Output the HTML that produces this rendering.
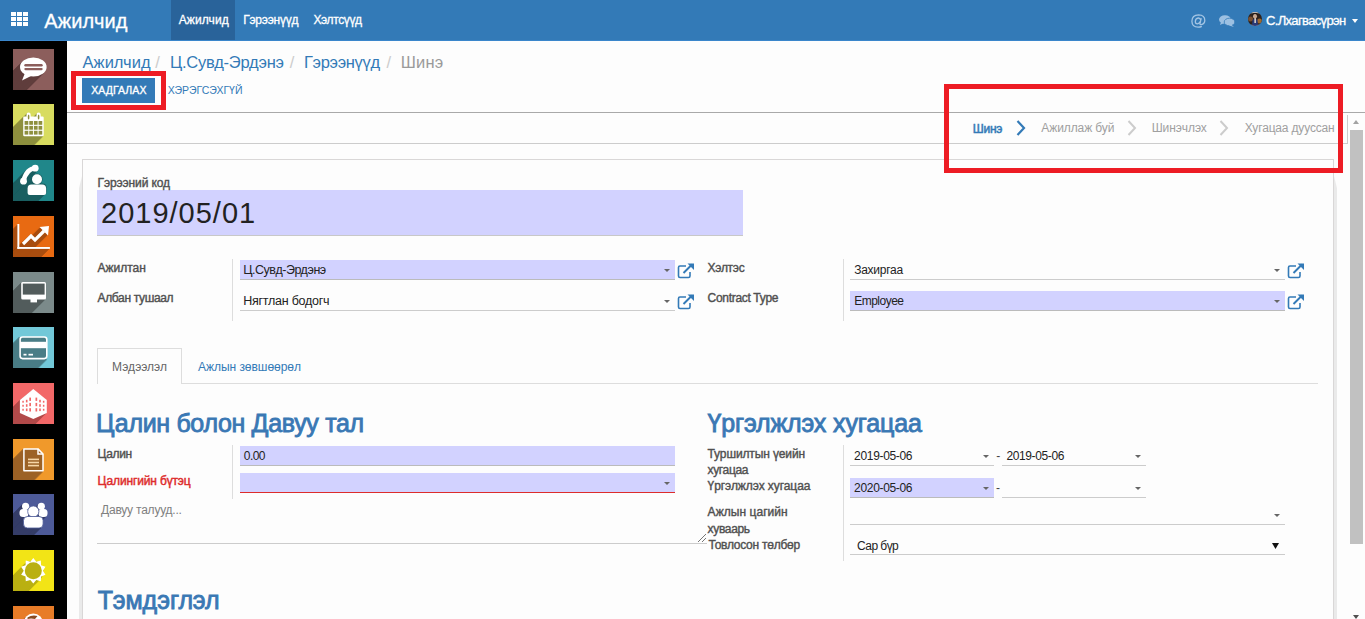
<!DOCTYPE html>
<html><head><meta charset="utf-8">
<style>
*{box-sizing:border-box;margin:0;padding:0}
html,body{width:1365px;height:619px;overflow:hidden;background:#fdfdfd;font-family:"Liberation Sans",sans-serif;color:#4c4c4c}
.t{position:absolute;white-space:nowrap;line-height:1}
#hdr{position:absolute;left:0;top:0;width:1365px;height:41px;background:#337ab7;border-bottom:1px solid #3a86cb}
#side{position:absolute;left:0;top:41px;width:67px;height:578px;background:#000}
.ic{position:absolute;left:13px;width:41px;height:41px;overflow:hidden}
.lbl{font-weight:bold;font-size:12px;color:#4c4c4c}
.val{font-size:12px;color:#333}
.req{position:absolute;background:#d2d2ff;border-bottom:1px solid #bbb}
.ul{position:absolute;height:1px;background:#ccc}
.sep{position:absolute;width:1px;background:#ddd}
.car{position:absolute;width:0;height:0;border-left:3px solid transparent;border-right:3px solid transparent;border-top:3px solid #666}
.h2{font-size:25px;font-weight:bold;color:#3a78b4}
.ext{position:absolute;width:18px;height:16px}
.redbox{position:absolute;border:5px solid #ed1c24}
</style></head><body>
<div id="hdr">
  <div style="position:absolute;left:171px;top:0;width:64px;height:40px;background:#29639a"></div>
  <svg style="position:absolute;left:11px;top:12px" width="17" height="14" viewBox="0 0 17 14">
    <g fill="#fff"><rect x="0" y="0" width="5" height="4"/><rect x="6" y="0" width="5" height="4"/><rect x="12" y="0" width="5" height="4"/>
    <rect x="0" y="5" width="5" height="4"/><rect x="6" y="5" width="5" height="4"/><rect x="12" y="5" width="5" height="4"/>
    <rect x="0" y="10" width="5" height="4"/><rect x="6" y="10" width="5" height="4"/><rect x="12" y="10" width="5" height="4"/></g></svg>
  <svg style="position:absolute;left:1191px;top:14px" width="15" height="14" viewBox="0 0 15 14"><g fill="none" stroke="#a4c5e4" stroke-width="1.3"><path d="M10.2,4.2 L9,9.5 Q8.8,10.8 10.2,10.6 Q13.6,10 13.8,6.6 Q13.8,1 7.6,0.9 Q1,1 0.9,7.2 Q1,13 7.2,13.1 Q9.2,13.1 10.8,12.3"/><path d="M9.7,6 Q9.2,3.9 7.3,4 Q4.5,4.3 4.3,7.5 Q4.3,9.8 6.3,9.8 Q8.5,9.7 9.3,7.5"/></g></svg>
  <svg style="position:absolute;left:1219px;top:15px" width="16" height="12" viewBox="0 0 16 12">
    <ellipse cx="6" cy="4.5" rx="6" ry="4.3" fill="#9cc0e2"/><polygon points="2,7 1,10 5,8" fill="#9cc0e2"/>
    <ellipse cx="10.5" cy="7" rx="5.3" ry="3.8" fill="#9cc0e2" stroke="#337ab7" stroke-width="0.8"/><polygon points="12,9.5 15,12 10,10.5" fill="#9cc0e2"/></svg>
  <svg style="position:absolute;left:1248px;top:12px" width="14" height="14" viewBox="0 0 14 14"><defs><clipPath id="av"><circle cx="7" cy="7" r="7"/></clipPath></defs><g clip-path="url(#av)"><rect width="14" height="14" fill="#2e221c"/><rect x="0" y="0" width="14" height="1.2" fill="#e8e0d8"/><rect x="0" y="12.8" width="14" height="1.2" fill="#e8e0d8"/><circle cx="2.5" cy="7" r="2.5" fill="#7a5030"/><circle cx="11.5" cy="9" r="2.5" fill="#a06a30"/><path d="M4,14 L4.5,8 Q7,6 9.5,8 L10,14 Z" fill="#2a3a78"/><rect x="6.4" y="6" width="1.5" height="5" fill="#e0d8d0"/><ellipse cx="7" cy="4.2" rx="2" ry="2.3" fill="#c8a890"/><path d="M4.5,3 Q7,0.5 9.5,3 L9.5,2 Q7,-0.5 4.5,2 Z" fill="#1a1410"/></g></svg>
  <div style="position:absolute;left:1352px;top:19px;width:0;height:0;border-left:3px solid transparent;border-right:3px solid transparent;border-top:4px solid #fff"></div>
</div>
<div id="side">
</div>
<div style="position:absolute;left:0;top:0">
<svg class="ic" style="top:49px" width="41" height="41" viewBox="0 0 41 41"><rect width="41" height="41" fill="#8c5e5c"/><defs><g id="s1"><ellipse cx="20.3" cy="18" rx="13.3" ry="9.6" stroke="none"/><polygon points="12,24 9,31.5 20,26" stroke="none"/></g></defs><g fill="#603e3d" stroke="#603e3d"><use href="#s1" x="-1" y="1"/><use href="#s1" x="-2" y="2"/><use href="#s1" x="-3" y="3"/><use href="#s1" x="-4" y="4"/><use href="#s1" x="-5" y="5"/><use href="#s1" x="-6" y="6"/><use href="#s1" x="-7" y="7"/><use href="#s1" x="-8" y="8"/><use href="#s1" x="-9" y="9"/><use href="#s1" x="-10" y="10"/><use href="#s1" x="-11" y="11"/><use href="#s1" x="-12" y="12"/><use href="#s1" x="-13" y="13"/><use href="#s1" x="-14" y="14"/><use href="#s1" x="-15" y="15"/><use href="#s1" x="-16" y="16"/><use href="#s1" x="-17" y="17"/><use href="#s1" x="-18" y="18"/><use href="#s1" x="-19" y="19"/><use href="#s1" x="-20" y="20"/><use href="#s1" x="-21" y="21"/><use href="#s1" x="-22" y="22"/><use href="#s1" x="-23" y="23"/><use href="#s1" x="-24" y="24"/><use href="#s1" x="-25" y="25"/><use href="#s1" x="-26" y="26"/><use href="#s1" x="-27" y="27"/><use href="#s1" x="-28" y="28"/><use href="#s1" x="-29" y="29"/><use href="#s1" x="-30" y="30"/><use href="#s1" x="-31" y="31"/><use href="#s1" x="-32" y="32"/><use href="#s1" x="-33" y="33"/><use href="#s1" x="-34" y="34"/><use href="#s1" x="-35" y="35"/><use href="#s1" x="-36" y="36"/><use href="#s1" x="-37" y="37"/><use href="#s1" x="-38" y="38"/><use href="#s1" x="-39" y="39"/><use href="#s1" x="-40" y="40"/><use href="#s1" x="-41" y="41"/><use href="#s1" x="-42" y="42"/><use href="#s1" x="-43" y="43"/><use href="#s1" x="-44" y="44"/><use href="#s1" x="-45" y="45"/></g><g fill="#fff"><ellipse cx="20.3" cy="18" rx="13.3" ry="9.6"/><polygon points="12,24 9,31.5 20,26"/></g><rect x="11.3" y="15" width="18.4" height="2.4" rx="1.2" fill="#8c5e5c"/><rect x="11.3" y="19" width="18.4" height="2.2" rx="1.1" fill="#8c5e5c"/></svg>
<svg class="ic" style="top:104px" width="41" height="41" viewBox="0 0 41 41"><rect width="41" height="41" fill="#d8dc5f"/><defs><g id="s2"><rect x="10.2" y="12.5" width="20.5" height="19.8" stroke="none"/><rect x="13.5" y="8.6" width="4.2" height="7.5" rx="2.1" stroke="none"/><rect x="23.5" y="8.6" width="4.2" height="7.5" rx="2.1" stroke="none"/></g></defs><g fill="#8e8f3e" stroke="#8e8f3e"><use href="#s2" x="-1" y="1"/><use href="#s2" x="-2" y="2"/><use href="#s2" x="-3" y="3"/><use href="#s2" x="-4" y="4"/><use href="#s2" x="-5" y="5"/><use href="#s2" x="-6" y="6"/><use href="#s2" x="-7" y="7"/><use href="#s2" x="-8" y="8"/><use href="#s2" x="-9" y="9"/><use href="#s2" x="-10" y="10"/><use href="#s2" x="-11" y="11"/><use href="#s2" x="-12" y="12"/><use href="#s2" x="-13" y="13"/><use href="#s2" x="-14" y="14"/><use href="#s2" x="-15" y="15"/><use href="#s2" x="-16" y="16"/><use href="#s2" x="-17" y="17"/><use href="#s2" x="-18" y="18"/><use href="#s2" x="-19" y="19"/><use href="#s2" x="-20" y="20"/><use href="#s2" x="-21" y="21"/><use href="#s2" x="-22" y="22"/><use href="#s2" x="-23" y="23"/><use href="#s2" x="-24" y="24"/><use href="#s2" x="-25" y="25"/><use href="#s2" x="-26" y="26"/><use href="#s2" x="-27" y="27"/><use href="#s2" x="-28" y="28"/><use href="#s2" x="-29" y="29"/><use href="#s2" x="-30" y="30"/><use href="#s2" x="-31" y="31"/><use href="#s2" x="-32" y="32"/><use href="#s2" x="-33" y="33"/><use href="#s2" x="-34" y="34"/><use href="#s2" x="-35" y="35"/><use href="#s2" x="-36" y="36"/><use href="#s2" x="-37" y="37"/><use href="#s2" x="-38" y="38"/><use href="#s2" x="-39" y="39"/><use href="#s2" x="-40" y="40"/><use href="#s2" x="-41" y="41"/><use href="#s2" x="-42" y="42"/><use href="#s2" x="-43" y="43"/><use href="#s2" x="-44" y="44"/><use href="#s2" x="-45" y="45"/></g><rect x="10.2" y="12.5" width="20.5" height="19.8" rx="1.2" fill="#fff"/><rect x="13.5" y="8.6" width="4.2" height="7.5" rx="2.1" fill="#fff"/><rect x="23.5" y="8.6" width="4.2" height="7.5" rx="2.1" fill="#fff"/><ellipse cx="15.6" cy="13" rx="0.85" ry="2.5" fill="#8e8f3e"/><ellipse cx="25.6" cy="13" rx="0.85" ry="2.5" fill="#8e8f3e"/><rect x="11.60" y="17.00" width="3.7" height="3.8" fill="#8e8f3e"/><rect x="16.25" y="17.00" width="3.7" height="3.8" fill="#8e8f3e"/><rect x="20.90" y="17.00" width="3.7" height="3.8" fill="#8e8f3e"/><rect x="25.55" y="17.00" width="3.7" height="3.8" fill="#8e8f3e"/><rect x="11.60" y="21.90" width="3.7" height="3.8" fill="#8e8f3e"/><rect x="16.25" y="21.90" width="3.7" height="3.8" fill="#8e8f3e"/><rect x="20.90" y="21.90" width="3.7" height="3.8" fill="#8e8f3e"/><rect x="25.55" y="21.90" width="3.7" height="3.8" fill="#8e8f3e"/><rect x="11.60" y="26.80" width="3.7" height="3.8" fill="#8e8f3e"/><rect x="16.25" y="26.80" width="3.7" height="3.8" fill="#8e8f3e"/><rect x="20.90" y="26.80" width="3.7" height="3.8" fill="#8e8f3e"/><rect x="25.55" y="26.80" width="3.7" height="3.8" fill="#8e8f3e"/></svg>
<svg class="ic" style="top:160px" width="41" height="41" viewBox="0 0 41 41"><rect width="41" height="41" fill="#20878a"/><defs><g id="s3"><path d="M22.5,8.2 Q13.5,8.5 10.3,21.2" fill="none" stroke-width="4.6" stroke-linecap="round"/><circle cx="22.2" cy="8.2" r="3.4" stroke="none"/><circle cx="10.5" cy="21.2" r="3.4" stroke="none"/><circle cx="24" cy="19.2" r="5.1" stroke="none"/><rect x="14.6" y="24.2" width="18.5" height="10.9" rx="3.5" stroke="none"/></g></defs><g fill="#1b5f61" stroke="#1b5f61"><use href="#s3" x="-1" y="1"/><use href="#s3" x="-2" y="2"/><use href="#s3" x="-3" y="3"/><use href="#s3" x="-4" y="4"/><use href="#s3" x="-5" y="5"/><use href="#s3" x="-6" y="6"/><use href="#s3" x="-7" y="7"/><use href="#s3" x="-8" y="8"/><use href="#s3" x="-9" y="9"/><use href="#s3" x="-10" y="10"/><use href="#s3" x="-11" y="11"/><use href="#s3" x="-12" y="12"/><use href="#s3" x="-13" y="13"/><use href="#s3" x="-14" y="14"/><use href="#s3" x="-15" y="15"/><use href="#s3" x="-16" y="16"/><use href="#s3" x="-17" y="17"/><use href="#s3" x="-18" y="18"/><use href="#s3" x="-19" y="19"/><use href="#s3" x="-20" y="20"/><use href="#s3" x="-21" y="21"/><use href="#s3" x="-22" y="22"/><use href="#s3" x="-23" y="23"/><use href="#s3" x="-24" y="24"/><use href="#s3" x="-25" y="25"/><use href="#s3" x="-26" y="26"/><use href="#s3" x="-27" y="27"/><use href="#s3" x="-28" y="28"/><use href="#s3" x="-29" y="29"/><use href="#s3" x="-30" y="30"/><use href="#s3" x="-31" y="31"/><use href="#s3" x="-32" y="32"/><use href="#s3" x="-33" y="33"/><use href="#s3" x="-34" y="34"/><use href="#s3" x="-35" y="35"/><use href="#s3" x="-36" y="36"/><use href="#s3" x="-37" y="37"/><use href="#s3" x="-38" y="38"/><use href="#s3" x="-39" y="39"/><use href="#s3" x="-40" y="40"/><use href="#s3" x="-41" y="41"/><use href="#s3" x="-42" y="42"/><use href="#s3" x="-43" y="43"/><use href="#s3" x="-44" y="44"/><use href="#s3" x="-45" y="45"/></g><g fill="#fff" stroke="#fff"><path d="M22.5,8.2 Q13.5,8.5 10.3,21.2" fill="none" stroke-width="4.6" stroke-linecap="round"/><circle cx="22.2" cy="8.2" r="3.4" stroke="none"/><circle cx="10.5" cy="21.2" r="3.4" stroke="none"/></g><circle cx="24" cy="19.2" r="5.6" fill="#1b5f61"/><rect x="14.1" y="23.4" width="19.5" height="12" rx="3.8" fill="#1b5f61"/><circle cx="24" cy="19.2" r="5.0" fill="#fff"/><path d="M18.5,24.6 H29 Q33.1,24.6 33.1,28.5 V33 Q33.1,35.1 31,35.1 H16.7 Q14.6,35.1 14.6,33 V28.5 Q14.6,24.6 18.5,24.6 Z" fill="#fff"/></svg>
<svg class="ic" style="top:216px" width="41" height="41" viewBox="0 0 41 41"><rect width="41" height="41" fill="#e86a12"/><defs><g id="s4"><rect x="4.4" y="8" width="1.9" height="24.8" stroke="none"/><rect x="4.4" y="31" width="32.5" height="1.9" stroke="none"/><polyline points="10,28 18,20 22,24 31,15" fill="none" stroke-width="3.2"/><polygon points="26.5,11 36,10 35,19.5" stroke="none"/></g></defs><g fill="#a84d0f" stroke="#a84d0f"><use href="#s4" x="-1" y="1"/><use href="#s4" x="-2" y="2"/><use href="#s4" x="-3" y="3"/><use href="#s4" x="-4" y="4"/><use href="#s4" x="-5" y="5"/><use href="#s4" x="-6" y="6"/><use href="#s4" x="-7" y="7"/><use href="#s4" x="-8" y="8"/><use href="#s4" x="-9" y="9"/><use href="#s4" x="-10" y="10"/><use href="#s4" x="-11" y="11"/><use href="#s4" x="-12" y="12"/><use href="#s4" x="-13" y="13"/><use href="#s4" x="-14" y="14"/><use href="#s4" x="-15" y="15"/><use href="#s4" x="-16" y="16"/><use href="#s4" x="-17" y="17"/><use href="#s4" x="-18" y="18"/><use href="#s4" x="-19" y="19"/><use href="#s4" x="-20" y="20"/><use href="#s4" x="-21" y="21"/><use href="#s4" x="-22" y="22"/><use href="#s4" x="-23" y="23"/><use href="#s4" x="-24" y="24"/><use href="#s4" x="-25" y="25"/><use href="#s4" x="-26" y="26"/><use href="#s4" x="-27" y="27"/><use href="#s4" x="-28" y="28"/><use href="#s4" x="-29" y="29"/><use href="#s4" x="-30" y="30"/><use href="#s4" x="-31" y="31"/><use href="#s4" x="-32" y="32"/><use href="#s4" x="-33" y="33"/><use href="#s4" x="-34" y="34"/><use href="#s4" x="-35" y="35"/><use href="#s4" x="-36" y="36"/><use href="#s4" x="-37" y="37"/><use href="#s4" x="-38" y="38"/><use href="#s4" x="-39" y="39"/><use href="#s4" x="-40" y="40"/><use href="#s4" x="-41" y="41"/><use href="#s4" x="-42" y="42"/><use href="#s4" x="-43" y="43"/><use href="#s4" x="-44" y="44"/><use href="#s4" x="-45" y="45"/></g><g fill="#fff" stroke="#fff"><rect x="4.4" y="8" width="1.9" height="24.8" stroke="none"/><rect x="4.4" y="31" width="32.5" height="1.9" stroke="none"/><polyline points="10,28 18,20 22,24 31,15" fill="none" stroke-width="3.2"/><polygon points="26.5,11 36,10 35,19.5" stroke="none"/></g></svg>
<svg class="ic" style="top:272px" width="41" height="41" viewBox="0 0 41 41"><rect width="41" height="41" fill="#7b8a8a"/><defs><g id="s5"><rect x="8.2" y="10" width="24.8" height="17.4" stroke="none"/><rect x="17.5" y="27" width="6.5" height="3.4" stroke="none"/></g></defs><g fill="#525c5c" stroke="#525c5c"><use href="#s5" x="-1" y="1"/><use href="#s5" x="-2" y="2"/><use href="#s5" x="-3" y="3"/><use href="#s5" x="-4" y="4"/><use href="#s5" x="-5" y="5"/><use href="#s5" x="-6" y="6"/><use href="#s5" x="-7" y="7"/><use href="#s5" x="-8" y="8"/><use href="#s5" x="-9" y="9"/><use href="#s5" x="-10" y="10"/><use href="#s5" x="-11" y="11"/><use href="#s5" x="-12" y="12"/><use href="#s5" x="-13" y="13"/><use href="#s5" x="-14" y="14"/><use href="#s5" x="-15" y="15"/><use href="#s5" x="-16" y="16"/><use href="#s5" x="-17" y="17"/><use href="#s5" x="-18" y="18"/><use href="#s5" x="-19" y="19"/><use href="#s5" x="-20" y="20"/><use href="#s5" x="-21" y="21"/><use href="#s5" x="-22" y="22"/><use href="#s5" x="-23" y="23"/><use href="#s5" x="-24" y="24"/><use href="#s5" x="-25" y="25"/><use href="#s5" x="-26" y="26"/><use href="#s5" x="-27" y="27"/><use href="#s5" x="-28" y="28"/><use href="#s5" x="-29" y="29"/><use href="#s5" x="-30" y="30"/><use href="#s5" x="-31" y="31"/><use href="#s5" x="-32" y="32"/><use href="#s5" x="-33" y="33"/><use href="#s5" x="-34" y="34"/><use href="#s5" x="-35" y="35"/><use href="#s5" x="-36" y="36"/><use href="#s5" x="-37" y="37"/><use href="#s5" x="-38" y="38"/><use href="#s5" x="-39" y="39"/><use href="#s5" x="-40" y="40"/><use href="#s5" x="-41" y="41"/><use href="#s5" x="-42" y="42"/><use href="#s5" x="-43" y="43"/><use href="#s5" x="-44" y="44"/><use href="#s5" x="-45" y="45"/></g><rect x="8.2" y="10" width="24.8" height="17.4" rx="1.5" fill="#fff"/><rect x="9.8" y="11.6" width="21.8" height="11" fill="#525c5c"/><rect x="17.5" y="27" width="6.5" height="3.4" fill="#fff"/></svg>
<svg class="ic" style="top:327px" width="41" height="41" viewBox="0 0 41 41"><rect width="41" height="41" fill="#72c8d8"/><defs><g id="s6"><rect x="6.3" y="9.2" width="28.3" height="23.2" stroke="none"/></g></defs><g fill="#4a7d86" stroke="#4a7d86"><use href="#s6" x="-1" y="1"/><use href="#s6" x="-2" y="2"/><use href="#s6" x="-3" y="3"/><use href="#s6" x="-4" y="4"/><use href="#s6" x="-5" y="5"/><use href="#s6" x="-6" y="6"/><use href="#s6" x="-7" y="7"/><use href="#s6" x="-8" y="8"/><use href="#s6" x="-9" y="9"/><use href="#s6" x="-10" y="10"/><use href="#s6" x="-11" y="11"/><use href="#s6" x="-12" y="12"/><use href="#s6" x="-13" y="13"/><use href="#s6" x="-14" y="14"/><use href="#s6" x="-15" y="15"/><use href="#s6" x="-16" y="16"/><use href="#s6" x="-17" y="17"/><use href="#s6" x="-18" y="18"/><use href="#s6" x="-19" y="19"/><use href="#s6" x="-20" y="20"/><use href="#s6" x="-21" y="21"/><use href="#s6" x="-22" y="22"/><use href="#s6" x="-23" y="23"/><use href="#s6" x="-24" y="24"/><use href="#s6" x="-25" y="25"/><use href="#s6" x="-26" y="26"/><use href="#s6" x="-27" y="27"/><use href="#s6" x="-28" y="28"/><use href="#s6" x="-29" y="29"/><use href="#s6" x="-30" y="30"/><use href="#s6" x="-31" y="31"/><use href="#s6" x="-32" y="32"/><use href="#s6" x="-33" y="33"/><use href="#s6" x="-34" y="34"/><use href="#s6" x="-35" y="35"/><use href="#s6" x="-36" y="36"/><use href="#s6" x="-37" y="37"/><use href="#s6" x="-38" y="38"/><use href="#s6" x="-39" y="39"/><use href="#s6" x="-40" y="40"/><use href="#s6" x="-41" y="41"/><use href="#s6" x="-42" y="42"/><use href="#s6" x="-43" y="43"/><use href="#s6" x="-44" y="44"/><use href="#s6" x="-45" y="45"/></g><rect x="7.1" y="10" width="26.7" height="21.6" rx="2.5" fill="#4a7d86" stroke="#fff" stroke-width="1.6"/><rect x="7" y="14.8" width="27" height="6.4" fill="#fff"/><rect x="10.5" y="26.8" width="3" height="1.7" fill="#fff"/><rect x="15.5" y="26.8" width="4.5" height="1.7" fill="#fff"/></svg>
<svg class="ic" style="top:383px" width="41" height="41" viewBox="0 0 41 41"><rect width="41" height="41" fill="#f26868"/><defs><g id="s7"><polygon points="20.3,6 33.8,17 33.8,30 20.3,36 6.9,30 6.9,17" stroke="none"/></g></defs><g fill="#b24a4a" stroke="#b24a4a"><use href="#s7" x="-1" y="1"/><use href="#s7" x="-2" y="2"/><use href="#s7" x="-3" y="3"/><use href="#s7" x="-4" y="4"/><use href="#s7" x="-5" y="5"/><use href="#s7" x="-6" y="6"/><use href="#s7" x="-7" y="7"/><use href="#s7" x="-8" y="8"/><use href="#s7" x="-9" y="9"/><use href="#s7" x="-10" y="10"/><use href="#s7" x="-11" y="11"/><use href="#s7" x="-12" y="12"/><use href="#s7" x="-13" y="13"/><use href="#s7" x="-14" y="14"/><use href="#s7" x="-15" y="15"/><use href="#s7" x="-16" y="16"/><use href="#s7" x="-17" y="17"/><use href="#s7" x="-18" y="18"/><use href="#s7" x="-19" y="19"/><use href="#s7" x="-20" y="20"/><use href="#s7" x="-21" y="21"/><use href="#s7" x="-22" y="22"/><use href="#s7" x="-23" y="23"/><use href="#s7" x="-24" y="24"/><use href="#s7" x="-25" y="25"/><use href="#s7" x="-26" y="26"/><use href="#s7" x="-27" y="27"/><use href="#s7" x="-28" y="28"/><use href="#s7" x="-29" y="29"/><use href="#s7" x="-30" y="30"/><use href="#s7" x="-31" y="31"/><use href="#s7" x="-32" y="32"/><use href="#s7" x="-33" y="33"/><use href="#s7" x="-34" y="34"/><use href="#s7" x="-35" y="35"/><use href="#s7" x="-36" y="36"/><use href="#s7" x="-37" y="37"/><use href="#s7" x="-38" y="38"/><use href="#s7" x="-39" y="39"/><use href="#s7" x="-40" y="40"/><use href="#s7" x="-41" y="41"/><use href="#s7" x="-42" y="42"/><use href="#s7" x="-43" y="43"/><use href="#s7" x="-44" y="44"/><use href="#s7" x="-45" y="45"/></g><polygon points="20.3,6 33.8,17 33.8,30 20.3,36 6.9,30 6.9,17" fill="#fff"/><rect x="9.3" y="17.8" width="1.5" height="1.9" fill="#f26868"/><rect x="9.3" y="21.8" width="1.5" height="1.9" fill="#f26868"/><rect x="9.3" y="25.8" width="1.5" height="1.9" fill="#f26868"/><rect x="12.9" y="16.8" width="1.6" height="2.6" fill="#f26868"/><rect x="12.9" y="21.2" width="1.6" height="2.6" fill="#f26868"/><rect x="12.9" y="25.5" width="1.6" height="2.6" fill="#f26868"/><rect x="16.3" y="14.6" width="1.7" height="3.3" fill="#f26868"/><rect x="16.3" y="19.9" width="1.7" height="3.3" fill="#f26868"/><rect x="16.3" y="25.2" width="1.7" height="3.3" fill="#f26868"/><rect x="22.5" y="14.6" width="1.7" height="3.3" fill="#f26868"/><rect x="22.5" y="19.9" width="1.7" height="3.3" fill="#f26868"/><rect x="22.5" y="25.2" width="1.7" height="3.3" fill="#f26868"/><rect x="26.2" y="16.8" width="1.6" height="2.6" fill="#f26868"/><rect x="26.2" y="21.2" width="1.6" height="2.6" fill="#f26868"/><rect x="26.2" y="25.5" width="1.6" height="2.6" fill="#f26868"/><rect x="29.9" y="17.8" width="1.5" height="1.9" fill="#f26868"/><rect x="29.9" y="21.8" width="1.5" height="1.9" fill="#f26868"/><rect x="29.9" y="25.8" width="1.5" height="1.9" fill="#f26868"/></svg>
<svg class="ic" style="top:439px" width="41" height="41" viewBox="0 0 41 41"><rect width="41" height="41" fill="#f0992b"/><defs><g id="s8"><path d="M10.2,9.2 H25 L30.7,15 V32.4 H10.2 Z" stroke="none"/></g></defs><g fill="#9c6226" stroke="#9c6226"><use href="#s8" x="-1" y="1"/><use href="#s8" x="-2" y="2"/><use href="#s8" x="-3" y="3"/><use href="#s8" x="-4" y="4"/><use href="#s8" x="-5" y="5"/><use href="#s8" x="-6" y="6"/><use href="#s8" x="-7" y="7"/><use href="#s8" x="-8" y="8"/><use href="#s8" x="-9" y="9"/><use href="#s8" x="-10" y="10"/><use href="#s8" x="-11" y="11"/><use href="#s8" x="-12" y="12"/><use href="#s8" x="-13" y="13"/><use href="#s8" x="-14" y="14"/><use href="#s8" x="-15" y="15"/><use href="#s8" x="-16" y="16"/><use href="#s8" x="-17" y="17"/><use href="#s8" x="-18" y="18"/><use href="#s8" x="-19" y="19"/><use href="#s8" x="-20" y="20"/><use href="#s8" x="-21" y="21"/><use href="#s8" x="-22" y="22"/><use href="#s8" x="-23" y="23"/><use href="#s8" x="-24" y="24"/><use href="#s8" x="-25" y="25"/><use href="#s8" x="-26" y="26"/><use href="#s8" x="-27" y="27"/><use href="#s8" x="-28" y="28"/><use href="#s8" x="-29" y="29"/><use href="#s8" x="-30" y="30"/><use href="#s8" x="-31" y="31"/><use href="#s8" x="-32" y="32"/><use href="#s8" x="-33" y="33"/><use href="#s8" x="-34" y="34"/><use href="#s8" x="-35" y="35"/><use href="#s8" x="-36" y="36"/><use href="#s8" x="-37" y="37"/><use href="#s8" x="-38" y="38"/><use href="#s8" x="-39" y="39"/><use href="#s8" x="-40" y="40"/><use href="#s8" x="-41" y="41"/><use href="#s8" x="-42" y="42"/><use href="#s8" x="-43" y="43"/><use href="#s8" x="-44" y="44"/><use href="#s8" x="-45" y="45"/></g><path d="M10.9,9.9 H25 L30,15 V31.7 H10.9 Z" fill="#9c6226" stroke="#fff" stroke-width="1.5" stroke-linejoin="round"/><path d="M25,9.9 V15 H30" fill="none" stroke="#fff" stroke-width="1.5"/><rect x="15" y="19.6" width="11" height="1.6" fill="#f6d6a8"/><rect x="15" y="22.7" width="11" height="1.6" fill="#f6d6a8"/><rect x="15" y="25.8" width="11" height="1.6" fill="#f6d6a8"/></svg>
<svg class="ic" style="top:494px" width="41" height="41" viewBox="0 0 41 41"><rect width="41" height="41" fill="#4d5a98"/><defs><g id="s9"><circle cx="12.6" cy="12.3" r="3.6" stroke="none"/><circle cx="28.3" cy="12.3" r="3.6" stroke="none"/><rect x="6.5" y="15" width="9" height="8" rx="3.5" stroke="none"/><rect x="25.5" y="15" width="9" height="8" rx="3.5" stroke="none"/><circle cx="20.3" cy="17.5" r="5.6" stroke="none"/><rect x="10.5" y="22.5" width="19.6" height="11.5" rx="4" stroke="none"/></g></defs><g fill="#353d68" stroke="#353d68"><use href="#s9" x="-1" y="1"/><use href="#s9" x="-2" y="2"/><use href="#s9" x="-3" y="3"/><use href="#s9" x="-4" y="4"/><use href="#s9" x="-5" y="5"/><use href="#s9" x="-6" y="6"/><use href="#s9" x="-7" y="7"/><use href="#s9" x="-8" y="8"/><use href="#s9" x="-9" y="9"/><use href="#s9" x="-10" y="10"/><use href="#s9" x="-11" y="11"/><use href="#s9" x="-12" y="12"/><use href="#s9" x="-13" y="13"/><use href="#s9" x="-14" y="14"/><use href="#s9" x="-15" y="15"/><use href="#s9" x="-16" y="16"/><use href="#s9" x="-17" y="17"/><use href="#s9" x="-18" y="18"/><use href="#s9" x="-19" y="19"/><use href="#s9" x="-20" y="20"/><use href="#s9" x="-21" y="21"/><use href="#s9" x="-22" y="22"/><use href="#s9" x="-23" y="23"/><use href="#s9" x="-24" y="24"/><use href="#s9" x="-25" y="25"/><use href="#s9" x="-26" y="26"/><use href="#s9" x="-27" y="27"/><use href="#s9" x="-28" y="28"/><use href="#s9" x="-29" y="29"/><use href="#s9" x="-30" y="30"/><use href="#s9" x="-31" y="31"/><use href="#s9" x="-32" y="32"/><use href="#s9" x="-33" y="33"/><use href="#s9" x="-34" y="34"/><use href="#s9" x="-35" y="35"/><use href="#s9" x="-36" y="36"/><use href="#s9" x="-37" y="37"/><use href="#s9" x="-38" y="38"/><use href="#s9" x="-39" y="39"/><use href="#s9" x="-40" y="40"/><use href="#s9" x="-41" y="41"/><use href="#s9" x="-42" y="42"/><use href="#s9" x="-43" y="43"/><use href="#s9" x="-44" y="44"/><use href="#s9" x="-45" y="45"/></g><g fill="#fff"><circle cx="12.6" cy="12.3" r="3.6"/><circle cx="28.3" cy="12.3" r="3.6"/><rect x="6.5" y="15" width="9" height="8" rx="3.5"/><rect x="25.5" y="15" width="9" height="8" rx="3.5"/></g><circle cx="20.3" cy="17.5" r="5.6" fill="#fff" stroke="#4d5a98" stroke-width="0.8"/><rect x="10.5" y="22.5" width="19.6" height="11.5" rx="4" fill="#fff" stroke="#4d5a98" stroke-width="0.8"/></svg>
<svg class="ic" style="top:550px" width="41" height="41" viewBox="0 0 41 41"><rect width="41" height="41" fill="#f2e416"/><defs><g id="s10"><circle cx="20.3" cy="20.8" r="11" stroke="none"/></g></defs><g fill="#bab012" stroke="#bab012"><use href="#s10" x="-1" y="1"/><use href="#s10" x="-2" y="2"/><use href="#s10" x="-3" y="3"/><use href="#s10" x="-4" y="4"/><use href="#s10" x="-5" y="5"/><use href="#s10" x="-6" y="6"/><use href="#s10" x="-7" y="7"/><use href="#s10" x="-8" y="8"/><use href="#s10" x="-9" y="9"/><use href="#s10" x="-10" y="10"/><use href="#s10" x="-11" y="11"/><use href="#s10" x="-12" y="12"/><use href="#s10" x="-13" y="13"/><use href="#s10" x="-14" y="14"/><use href="#s10" x="-15" y="15"/><use href="#s10" x="-16" y="16"/><use href="#s10" x="-17" y="17"/><use href="#s10" x="-18" y="18"/><use href="#s10" x="-19" y="19"/><use href="#s10" x="-20" y="20"/><use href="#s10" x="-21" y="21"/><use href="#s10" x="-22" y="22"/><use href="#s10" x="-23" y="23"/><use href="#s10" x="-24" y="24"/><use href="#s10" x="-25" y="25"/><use href="#s10" x="-26" y="26"/><use href="#s10" x="-27" y="27"/><use href="#s10" x="-28" y="28"/><use href="#s10" x="-29" y="29"/><use href="#s10" x="-30" y="30"/><use href="#s10" x="-31" y="31"/><use href="#s10" x="-32" y="32"/><use href="#s10" x="-33" y="33"/><use href="#s10" x="-34" y="34"/><use href="#s10" x="-35" y="35"/><use href="#s10" x="-36" y="36"/><use href="#s10" x="-37" y="37"/><use href="#s10" x="-38" y="38"/><use href="#s10" x="-39" y="39"/><use href="#s10" x="-40" y="40"/><use href="#s10" x="-41" y="41"/><use href="#s10" x="-42" y="42"/><use href="#s10" x="-43" y="43"/><use href="#s10" x="-44" y="44"/><use href="#s10" x="-45" y="45"/></g><polygon points="20.30,8.00 23.27,11.67 27.82,10.44 28.07,15.16 32.47,16.84 29.90,20.80 32.47,24.76 28.07,26.44 27.82,31.16 23.27,29.93 20.30,33.60 17.33,29.93 12.78,31.16 12.53,26.44 8.13,24.76 10.70,20.80 8.13,16.84 12.53,15.16 12.78,10.44 17.33,11.67" fill="#fff"/><circle cx="20.3" cy="20.8" r="8.5" fill="#bab012"/></svg>
<svg class="ic" style="top:606px" width="41" height="41" viewBox="0 0 41 41"><rect width="41" height="41" fill="#e87c28"/><defs><g id="s11"><circle cx="20.3" cy="17.5" r="10" stroke="none"/></g></defs><g fill="#a8561c" stroke="#a8561c"><use href="#s11" x="-1" y="1"/><use href="#s11" x="-2" y="2"/><use href="#s11" x="-3" y="3"/><use href="#s11" x="-4" y="4"/><use href="#s11" x="-5" y="5"/><use href="#s11" x="-6" y="6"/><use href="#s11" x="-7" y="7"/><use href="#s11" x="-8" y="8"/><use href="#s11" x="-9" y="9"/><use href="#s11" x="-10" y="10"/><use href="#s11" x="-11" y="11"/><use href="#s11" x="-12" y="12"/><use href="#s11" x="-13" y="13"/><use href="#s11" x="-14" y="14"/><use href="#s11" x="-15" y="15"/><use href="#s11" x="-16" y="16"/><use href="#s11" x="-17" y="17"/><use href="#s11" x="-18" y="18"/><use href="#s11" x="-19" y="19"/><use href="#s11" x="-20" y="20"/><use href="#s11" x="-21" y="21"/><use href="#s11" x="-22" y="22"/><use href="#s11" x="-23" y="23"/><use href="#s11" x="-24" y="24"/><use href="#s11" x="-25" y="25"/><use href="#s11" x="-26" y="26"/><use href="#s11" x="-27" y="27"/><use href="#s11" x="-28" y="28"/><use href="#s11" x="-29" y="29"/><use href="#s11" x="-30" y="30"/><use href="#s11" x="-31" y="31"/><use href="#s11" x="-32" y="32"/><use href="#s11" x="-33" y="33"/><use href="#s11" x="-34" y="34"/><use href="#s11" x="-35" y="35"/><use href="#s11" x="-36" y="36"/><use href="#s11" x="-37" y="37"/><use href="#s11" x="-38" y="38"/><use href="#s11" x="-39" y="39"/><use href="#s11" x="-40" y="40"/><use href="#s11" x="-41" y="41"/><use href="#s11" x="-42" y="42"/><use href="#s11" x="-43" y="43"/><use href="#s11" x="-44" y="44"/><use href="#s11" x="-45" y="45"/></g><circle cx="20.3" cy="17.5" r="10" fill="#fff"/><path d="M14.5,11.5 Q19,8.5 24.5,10 L22,13 Q18,12 14.5,13 Z" fill="#8a4a20"/></svg>
</div>

<!-- control panel -->

<div style="position:absolute;left:82px;top:78px;width:73px;height:25px;background:#337ab7"></div>

<div style="position:absolute;left:67px;top:112px;width:1298px;height:1px;background:#a9a9a9"></div>
<!-- statusbar -->
<div style="position:absolute;left:67px;top:143px;width:1281px;height:1px;background:#ccc"></div>
<div style="position:absolute;left:1347px;top:115px;width:1px;height:28px;background:#ccc"></div>
<svg style="position:absolute;left:1016px;top:120px" width="10" height="16" viewBox="0 0 10 16"><polyline points="1.5,1 8,8 1.5,15" fill="none" stroke="#337ab7" stroke-width="2.2"/></svg>
<svg style="position:absolute;left:1127px;top:120px" width="10" height="16" viewBox="0 0 10 16"><polyline points="1.5,1 8,8 1.5,15" fill="none" stroke="#ccc" stroke-width="2"/></svg>
<svg style="position:absolute;left:1219px;top:120px" width="10" height="16" viewBox="0 0 10 16"><polyline points="1.5,1 8,8 1.5,15" fill="none" stroke="#ccc" stroke-width="2"/></svg>

<!-- scrollbar -->
<div style="position:absolute;left:1350px;top:113px;width:15px;height:506px;background:#fdfdfd"></div>
<div style="position:absolute;left:1353px;top:120px;width:0;height:0;border-left:3.5px solid transparent;border-right:3.5px solid transparent;border-bottom:4px solid #a3a3a3"></div>
<div style="position:absolute;left:1350px;top:130px;width:13px;height:414px;background:#c1c1c1"></div>
<div style="position:absolute;left:1353px;top:615px;width:0;height:0;border-left:3.5px solid transparent;border-right:3.5px solid transparent;border-top:4px solid #505050"></div>

<!-- sheet -->
<div style="position:absolute;left:79px;top:176px;width:3px;height:443px;background:rgba(0,0,0,0.075);clip-path:polygon(100% 0,100% 100%,0 100%,0 12px)"></div><div style="position:absolute;left:1334px;top:176px;width:3px;height:443px;background:rgba(0,0,0,0.075);clip-path:polygon(0 0,0 100%,100% 100%,100% 12px)"></div><div style="position:absolute;left:82px;top:159px;width:1252px;height:470px;background:#fdfdfd;border:1px solid #d9d7d7"></div>
<div class="req" style="left:97px;top:190px;width:646px;height:46px;border-bottom-color:#c8c8c8"></div>

<div class="sep" style="left:232px;top:259px;height:62px"></div>
<div class="req" style="left:240px;top:260px;width:435px;height:20px"></div>
<div class="car" style="left:664px;top:269px"></div>
<div class="ul" style="left:240px;top:310px;width:435px"></div>
<div class="car" style="left:664px;top:300px"></div>
<svg class="ext" style="left:677px;top:263px" width="18" height="16" viewBox="0 0 18 16"><path d="M9,3 H3 Q1.5,3 1.5,4.5 V13 Q1.5,14.5 3,14.5 H11.5 Q13,14.5 13,13 V9" fill="none" stroke="#337ab7" stroke-width="1.6"/><path d="M6.5,10 L15,1.5" stroke="#337ab7" stroke-width="2"/><polygon points="10.5,0.5 17,0.5 17,7" fill="#337ab7"/></svg><svg class="ext" style="left:677px;top:294px" width="18" height="16" viewBox="0 0 18 16"><path d="M9,3 H3 Q1.5,3 1.5,4.5 V13 Q1.5,14.5 3,14.5 H11.5 Q13,14.5 13,13 V9" fill="none" stroke="#337ab7" stroke-width="1.6"/><path d="M6.5,10 L15,1.5" stroke="#337ab7" stroke-width="2"/><polygon points="10.5,0.5 17,0.5 17,7" fill="#337ab7"/></svg>
<div class="sep" style="left:843px;top:259px;height:62px"></div>
<div class="ul" style="left:850px;top:279px;width:435px"></div>
<div class="car" style="left:1274px;top:269px"></div>
<div class="req" style="left:850px;top:291px;width:435px;height:20px"></div>
<div class="car" style="left:1274px;top:300px"></div>
<svg class="ext" style="left:1287px;top:263px" width="18" height="16" viewBox="0 0 18 16"><path d="M9,3 H3 Q1.5,3 1.5,4.5 V13 Q1.5,14.5 3,14.5 H11.5 Q13,14.5 13,13 V9" fill="none" stroke="#337ab7" stroke-width="1.6"/><path d="M6.5,10 L15,1.5" stroke="#337ab7" stroke-width="2"/><polygon points="10.5,0.5 17,0.5 17,7" fill="#337ab7"/></svg><svg class="ext" style="left:1287px;top:294px" width="18" height="16" viewBox="0 0 18 16"><path d="M9,3 H3 Q1.5,3 1.5,4.5 V13 Q1.5,14.5 3,14.5 H11.5 Q13,14.5 13,13 V9" fill="none" stroke="#337ab7" stroke-width="1.6"/><path d="M6.5,10 L15,1.5" stroke="#337ab7" stroke-width="2"/><polygon points="10.5,0.5 17,0.5 17,7" fill="#337ab7"/></svg>

<!-- tabs -->
<div style="position:absolute;left:97px;top:383px;width:1221px;height:1px;background:#ddd"></div>
<div style="position:absolute;left:97px;top:348px;width:85px;height:36px;background:#fdfdfd;border:1px solid #ddd;border-bottom:none"></div>
<div class="sep" style="left:232px;top:445px;height:54px"></div>
<div class="req" style="left:240px;top:446px;width:435px;height:20px"></div>
<div class="req" style="left:240px;top:473px;width:435px;height:20px;border-bottom-color:#dd2c2c"></div>
<div class="car" style="left:664px;top:482px"></div>
<div class="ul" style="left:97px;top:543px;width:610px"></div>
<svg style="position:absolute;left:697px;top:533px" width="10" height="10" viewBox="0 0 10 10"><path d="M1,9 L9,1 M5,9 L9,5" stroke="#777" stroke-width="1"/></svg>
<div class="sep" style="left:843px;top:445px;height:116px"></div>

<div class="ul" style="left:850px;top:465px;width:144px"></div>
<div class="car" style="left:983px;top:455px"></div>
<div class="ul" style="left:1002px;top:465px;width:144px"></div>
<div class="car" style="left:1135px;top:455px"></div>

<div class="req" style="left:850px;top:478px;width:144px;height:20px"></div>
<div class="car" style="left:983px;top:487px"></div>
<div class="ul" style="left:1002px;top:497px;width:144px"></div>
<div class="car" style="left:1135px;top:487px"></div>

<div class="ul" style="left:850px;top:524px;width:435px"></div>
<div class="car" style="left:1274px;top:514px"></div>
<div class="ul" style="left:850px;top:554px;width:435px"></div>
<div class="redbox" style="left:71px;top:71px;width:95px;height:39px"></div>
<div class="redbox" style="left:944px;top:84px;width:399px;height:89px"></div>
<svg style="position:absolute;left:1272px;top:543px" width="7" height="6" viewBox="0 0 7 6"><polygon points="0,0 7,0 3.5,6" fill="#111"/></svg>
<div class="t" style="left:44.15px;top:10.97px;font-size:20px;color:#fff;-webkit-text-stroke:0.3px #fff;letter-spacing:0.16px">Ажилчид</div>
<div class="t" style="left:178.65px;top:14.44px;font-size:12px;color:#fff;-webkit-text-stroke:0.3px #fff;letter-spacing:0.11px">Ажилчид</div>
<div class="t" style="left:243.15px;top:14.44px;font-size:12px;color:#fff;-webkit-text-stroke:0.3px #fff;letter-spacing:-0.23px">Гэрээнүүд</div>
<div class="t" style="left:313.45px;top:14.44px;font-size:12px;color:#fff;-webkit-text-stroke:0.3px #fff;letter-spacing:-0.38px">Хэлтсүүд</div>
<div class="t" style="left:1265.95px;top:13.79px;font-size:13px;color:#fff;-webkit-text-stroke:0.3px #fff;letter-spacing:-0.63px">С.Лхагвасүрэн</div>
<div class="t" style="left:82.60px;top:53.68px;font-size:16.5px;color:#337ab7">Ажилчид</div>
<div class="t" style="left:155.30px;top:53.68px;font-size:16.5px;color:#ccc">/</div>
<div class="t" style="left:170.00px;top:53.68px;font-size:16.5px;color:#337ab7;letter-spacing:-0.26px">Ц.Сувд-Эрдэнэ</div>
<div class="t" style="left:289.70px;top:53.68px;font-size:16.5px;color:#ccc">/</div>
<div class="t" style="left:304.00px;top:53.68px;font-size:16.5px;color:#337ab7;letter-spacing:-0.31px">Гэрээнүүд</div>
<div class="t" style="left:386.40px;top:53.68px;font-size:16.5px;color:#ccc">/</div>
<div class="t" style="left:400.70px;top:53.68px;font-size:16.5px;color:#9a9a9a;letter-spacing:0.22px">Шинэ</div>
<div class="t" style="left:91.17px;top:84.71px;font-size:10.5px;color:#fff;-webkit-text-stroke:0.35px #fff;letter-spacing:0.10px">ХАДГАЛАХ</div>
<div class="t" style="left:167.80px;top:84.71px;font-size:10.5px;color:#337ab7">ХЭРЭГСЭХГҮЙ</div>
<div class="t" style="left:972.75px;top:122.74px;font-size:12px;color:#337ab7;-webkit-text-stroke:0.5px #337ab7;letter-spacing:-0.28px">Шинэ</div>
<div class="t" style="left:1041.30px;top:122.44px;font-size:12px;color:#a0a0a0;letter-spacing:-0.09px">Ажиллаж буй</div>
<div class="t" style="left:1151.70px;top:122.44px;font-size:12px;color:#a0a0a0;letter-spacing:-0.08px">Шинэчлэх</div>
<div class="t" style="left:1244.80px;top:122.44px;font-size:12px;color:#a0a0a0;letter-spacing:-0.17px">Хугацаа дууссан</div>
<div class="t" style="left:97.50px;top:176.64px;font-size:12px;color:#505050;-webkit-text-stroke:0.4px #505050;letter-spacing:-0.10px">Гэрээний код</div>
<div class="t" style="left:101.00px;top:198.95px;font-size:29px;color:#222;letter-spacing:1.00px">2019/05/01</div>
<div class="t" style="left:97.50px;top:261.64px;font-size:12px;color:#505050;-webkit-text-stroke:0.4px #505050">Ажилтан</div>
<div class="t" style="left:97.50px;top:292.44px;font-size:12px;color:#505050;-webkit-text-stroke:0.4px #505050;letter-spacing:-0.34px">Албан тушаал</div>
<div class="t" style="left:243.30px;top:264.32px;font-size:12.5px;color:#222;letter-spacing:-0.48px">Ц.Сувд-Эрдэнэ</div>
<div class="t" style="left:243.30px;top:295.02px;font-size:12.5px;color:#222;letter-spacing:-0.26px">Нягтлан бодогч</div>
<div class="t" style="left:707.60px;top:261.54px;font-size:12px;color:#505050;-webkit-text-stroke:0.4px #505050;letter-spacing:-0.28px">Хэлтэс</div>
<div class="t" style="left:707.60px;top:292.24px;font-size:12px;color:#505050;-webkit-text-stroke:0.4px #505050;letter-spacing:-0.30px">Contract Type</div>
<div class="t" style="left:854.20px;top:264.24px;font-size:12px;color:#222;letter-spacing:-0.27px">Захиргаа</div>
<div class="t" style="left:854.20px;top:295.44px;font-size:12px;color:#222;letter-spacing:-0.51px">Employee</div>
<div class="t" style="left:112.00px;top:360.64px;font-size:12px;color:#666">Мэдээлэл</div>
<div class="t" style="left:198.00px;top:360.64px;font-size:12px;color:#337ab7;letter-spacing:-0.04px">Ажлын зөвшөөрөл</div>
<div class="t" style="left:96.12px;top:410.83px;font-size:25px;color:#3a78b4;-webkit-text-stroke:0.85px #3a78b4;letter-spacing:-0.33px">Цалин болон Давуу тал</div>
<div class="t" style="left:97.50px;top:447.74px;font-size:12px;color:#505050;-webkit-text-stroke:0.4px #505050;letter-spacing:-0.35px">Цалин</div>
<div class="t" style="left:97.52px;top:474.64px;font-size:12px;color:#dd2c2c;-webkit-text-stroke:0.45px #dd2c2c;letter-spacing:-0.15px">Цалингийн бүтэц</div>
<div class="t" style="left:243.80px;top:450.24px;font-size:12px;color:#222;letter-spacing:-0.56px">0.00</div>
<div class="t" style="left:101.00px;top:503.84px;font-size:12px;color:#808080;letter-spacing:-0.21px">Давуу талууд...</div>
<div class="t" style="left:707.42px;top:410.83px;font-size:25px;color:#3a78b4;-webkit-text-stroke:0.85px #3a78b4;letter-spacing:-0.13px">Үргэлжлэх хугацаа</div>
<div class="t" style="left:707.60px;top:447.94px;font-size:12px;color:#505050;-webkit-text-stroke:0.4px #505050;letter-spacing:-0.13px">Туршилтын үеийн</div>
<div class="t" style="left:707.60px;top:463.84px;font-size:12px;color:#505050;-webkit-text-stroke:0.4px #505050;letter-spacing:-0.37px">хугацаа</div>
<div class="t" style="left:707.60px;top:479.94px;font-size:12px;color:#505050;-webkit-text-stroke:0.4px #505050;letter-spacing:-0.07px">Үргэлжлэх хугацаа</div>
<div class="t" style="left:707.60px;top:506.44px;font-size:12px;color:#505050;-webkit-text-stroke:0.4px #505050;letter-spacing:0.05px">Ажлын цагийн</div>
<div class="t" style="left:707.60px;top:522.54px;font-size:12px;color:#505050;-webkit-text-stroke:0.4px #505050;letter-spacing:-0.34px">хуваарь</div>
<div class="t" style="left:708.50px;top:538.64px;font-size:12px;color:#505050;-webkit-text-stroke:0.4px #505050;letter-spacing:-0.25px">Товлосон төлбөр</div>
<div class="t" style="left:854.10px;top:450.34px;font-size:12px;color:#222;letter-spacing:-0.33px">2019-05-06</div>
<div class="t" style="left:1006.40px;top:450.34px;font-size:12px;color:#222;letter-spacing:-0.37px">2019-05-06</div>
<div class="t" style="left:854.10px;top:482.04px;font-size:12px;color:#222;letter-spacing:-0.33px">2020-05-06</div>
<div class="t" style="left:996.20px;top:450.34px;font-size:12px;color:#444">-</div>
<div class="t" style="left:996.10px;top:482.04px;font-size:12px;color:#444">-</div>
<div class="t" style="left:857.10px;top:540.34px;font-size:12px;color:#222;letter-spacing:-0.56px">Сар бүр</div>
<div class="t" style="left:97.72px;top:587.93px;font-size:25px;color:#3a78b4;-webkit-text-stroke:0.85px #3a78b4;letter-spacing:-0.12px">Тэмдэглэл</div>
</body></html>
